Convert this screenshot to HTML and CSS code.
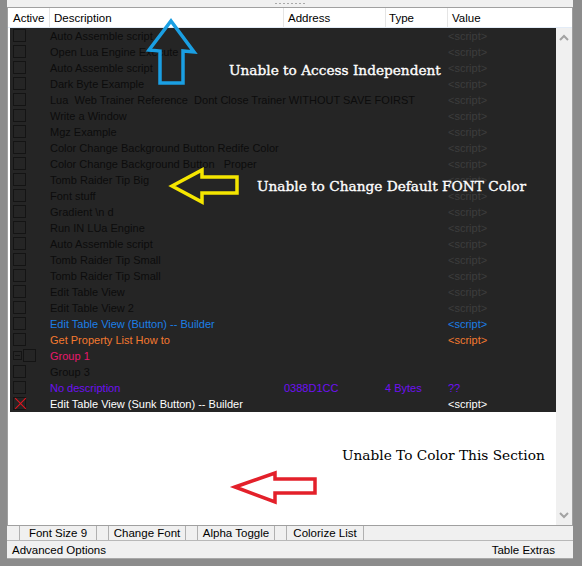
FILE: index.html
```
<!DOCTYPE html>
<html lang="en">
    <head>
        <meta charset="UTF-8">
        <meta name="viewport" content="width=device-width, initial-scale=1.0">
        <link rel="stylesheet" href="styles.css">
        <title>Cheat Table - Dark List</title>
    </head>
    <body>
        <div id="window">
            <div id="splitter"><div class="grip"></div></div>

            <div id="list-panel">
                <div id="header">
                    <div class="col col-active">Active</div>
                    <div class="col col-desc">Description</div>
                    <div class="col col-addr">Address</div>
                    <div class="col col-type">Type</div>
                    <div class="col col-value">Value</div>
                </div>

                <div id="list-body">
                    <div id="list-area">
                        <div id="records">
                            <div class="row"><div class="chk-cell"><span class="chk"></span></div><div class="desc">Auto Assemble script</div><div class="addr"></div><div class="type"></div><div class="value">&lt;script&gt;</div></div>
                            <div class="row"><div class="chk-cell"><span class="chk"></span></div><div class="desc">Open Lua Engine Execute</div><div class="addr"></div><div class="type"></div><div class="value">&lt;script&gt;</div></div>
                            <div class="row"><div class="chk-cell"><span class="chk"></span></div><div class="desc">Auto Assemble script</div><div class="addr"></div><div class="type"></div><div class="value">&lt;script&gt;</div></div>
                            <div class="row"><div class="chk-cell"><span class="chk"></span></div><div class="desc">Dark Byte Example</div><div class="addr"></div><div class="type"></div><div class="value">&lt;script&gt;</div></div>
                            <div class="row"><div class="chk-cell"><span class="chk"></span></div><div class="desc">Lua&nbsp; Web Trainer Reference&nbsp; Dont Close Trainer WITHOUT SAVE FOIRST</div><div class="addr"></div><div class="type"></div><div class="value">&lt;script&gt;</div></div>
                            <div class="row"><div class="chk-cell"><span class="chk"></span></div><div class="desc">Write a Window</div><div class="addr"></div><div class="type"></div><div class="value">&lt;script&gt;</div></div>
                            <div class="row"><div class="chk-cell"><span class="chk"></span></div><div class="desc">Mgz Example</div><div class="addr"></div><div class="type"></div><div class="value">&lt;script&gt;</div></div>
                            <div class="row"><div class="chk-cell"><span class="chk"></span></div><div class="desc">Color Change Background Button Redife Color</div><div class="addr"></div><div class="type"></div><div class="value">&lt;script&gt;</div></div>
                            <div class="row"><div class="chk-cell"><span class="chk"></span></div><div class="desc">Color Change Background Button&nbsp;&nbsp; Proper</div><div class="addr"></div><div class="type"></div><div class="value">&lt;script&gt;</div></div>
                            <div class="row"><div class="chk-cell"><span class="chk"></span></div><div class="desc">Tomb Raider Tip Big</div><div class="addr"></div><div class="type"></div><div class="value">&lt;script&gt;</div></div>
                            <div class="row"><div class="chk-cell"><span class="chk"></span></div><div class="desc">Font stuff</div><div class="addr"></div><div class="type"></div><div class="value">&lt;script&gt;</div></div>
                            <div class="row"><div class="chk-cell"><span class="chk"></span></div><div class="desc">Gradient \n d</div><div class="addr"></div><div class="type"></div><div class="value">&lt;script&gt;</div></div>
                            <div class="row"><div class="chk-cell"><span class="chk"></span></div><div class="desc">Run IN LUa Engine</div><div class="addr"></div><div class="type"></div><div class="value">&lt;script&gt;</div></div>
                            <div class="row"><div class="chk-cell"><span class="chk"></span></div><div class="desc">Auto Assemble script</div><div class="addr"></div><div class="type"></div><div class="value">&lt;script&gt;</div></div>
                            <div class="row"><div class="chk-cell"><span class="chk"></span></div><div class="desc">Tomb Raider Tip Small</div><div class="addr"></div><div class="type"></div><div class="value">&lt;script&gt;</div></div>
                            <div class="row"><div class="chk-cell"><span class="chk"></span></div><div class="desc">Tomb Raider Tip Small</div><div class="addr"></div><div class="type"></div><div class="value">&lt;script&gt;</div></div>
                            <div class="row"><div class="chk-cell"><span class="chk"></span></div><div class="desc">Edit Table View</div><div class="addr"></div><div class="type"></div><div class="value">&lt;script&gt;</div></div>
                            <div class="row"><div class="chk-cell"><span class="chk"></span></div><div class="desc">Edit Table View 2</div><div class="addr"></div><div class="type"></div><div class="value">&lt;script&gt;</div></div>
                            <div class="row blue"><div class="chk-cell"><span class="chk"></span></div><div class="desc">Edit Table View (Button) -- Builder</div><div class="addr"></div><div class="type"></div><div class="value">&lt;script&gt;</div></div>
                            <div class="row orange"><div class="chk-cell"><span class="chk"></span></div><div class="desc">Get Property List How to</div><div class="addr"></div><div class="type"></div><div class="value">&lt;script&gt;</div></div>
                            <div class="row pink"><div class="chk-cell"><span class="expander"></span><span class="chk"></span></div><div class="desc">Group 1</div><div class="addr"></div><div class="type"></div><div class="value"></div></div>
                            <div class="row"><div class="chk-cell"><span class="chk"></span></div><div class="desc">Group 3</div><div class="addr"></div><div class="type"></div><div class="value"></div></div>
                            <div class="row purple"><div class="chk-cell"><span class="chk"></span></div><div class="desc">No description</div><div class="addr">0388D1CC</div><div class="type">4 Bytes</div><div class="value">??</div></div>
                            <div class="row white"><div class="chk-cell"><span class="chk checked"></span></div><div class="desc">Edit Table View (Sunk Button) -- Builder</div><div class="addr"></div><div class="type"></div><div class="value">&lt;script&gt;</div></div>
                        </div>
                    </div>
                    <div id="scrollbar">
                        <svg class="arrow" width="16" height="16" viewBox="0 0 16 16"><polyline points="4,10 8,6 12,10" fill="none" stroke="#a3a3a3" stroke-width="2"/></svg>
                        <svg class="arrow" width="16" height="16" viewBox="0 0 16 16"><polyline points="4,6 8,10 12,6" fill="none" stroke="#a3a3a3" stroke-width="2"/></svg>
                    </div>
                </div>
            </div>

            <div id="tab-row">
                <div class="tab-box"></div><div class="tab-label">Font Size 9</div>
                <div class="tab-box"></div><div class="tab-label">Change Font</div>
                <div class="tab-box"></div><div class="tab-label">Alpha Toggle</div>
                <div class="tab-box"></div><div class="tab-label">Colorize List</div>
            </div>

            <div id="status-bar">
                <span>Advanced Options</span>
                <span>Table Extras</span>
            </div>
        </div>

        <!--annotations drawn over the screenshot-->
        <svg id="marks" width="582" height="566" viewBox="0 0 582 566">
            <polygon points="171,21 194,52 183,51 183,83 160,83 160,51 149,50" fill="none" stroke="#1a9fe3" stroke-width="3.5"/>
            <polygon points="172,186 202,170 202,177 237,177 237,193 202,193 202,202" fill="none" stroke="#f5e600" stroke-width="3.5"/>
            <polygon points="235,487 275,473 275,479 315,479 315,493 275,493 275,502" fill="none" stroke="#e3202a" stroke-width="3.5"/>
        </svg>
        <div class="note light" id="note-access">Unable to Access Independent</div>
        <div class="note light" id="note-font">Unable to Change Default FONT Color</div>
        <div class="note" id="note-section">Unable To Color This Section</div>
    </body>
</html>
```

FILE: styles.css
```
 body {
     margin: 0;
     width: 582px;
     height: 566px;
     background-color: #8c8c8c;
     font-family: 'Liberation Sans', Arial, sans-serif;
     font-size: 11px;
     color: black;
     position: relative;
     overflow: hidden;
 }

 #window {
     width: 566px;
     height: 559px;
     margin-left: 7px;
     background-color: #f0f0f0;
     display: flex;
     flex-direction: column;
 }

 #splitter {
     height: 7px;
     display: flex;
     justify-content: center;
 }

 .grip {
     width: 30px;
     height: 1px;
     margin-top: 3px;
     background-image: repeating-linear-gradient(to right, #a8a8a8 0 2px, transparent 2px 4px);
 }

 #list-panel {
     height: 518px;
     border: 1px solid #a0a0a0;
     background-color: white;
     display: flex;
     flex-direction: column;
 }

 #header {
     height: 20px;
     display: flex;
     border-bottom: 1px solid #e3ecf7;
     box-sizing: border-box;
     font-size: 11.5px;
 }

 .col {
     line-height: 20px;
     padding-left: 4px;
     border-right: 1px solid #e5e5e5;
     box-sizing: border-box;
 }

 .col-active { width: 42px; padding-left: 5px; }
 .col-desc { width: 234px; padding-left: 4px; }
 .col-addr { width: 102px; }
 .col-type { width: 62px; padding-left: 3px; }
 .col-value { flex: 1; border-right: none; }

 #list-body {
     flex: 1;
     display: flex;
 }

 #list-area {
     flex: 1;
     padding-left: 2px;
 }

 #records {
     background-color: #252525;
     height: 384px;
 }

 .row {
     height: 16px;
     display: flex;
     align-items: center;
     white-space: nowrap;
     color: #0c0c0c;
 }

 .row .value {
     color: #3d3d3d;
 }

 .chk-cell {
     width: 40px;
     display: flex;
     align-items: center;
     padding-left: 3px;
     box-sizing: border-box;
 }

 .chk {
     width: 13px;
     height: 13px;
     border: 1px solid #141414;
     box-sizing: border-box;
     position: relative;
 }

 .expander {
     width: 9px;
     height: 9px;
     border: 1px solid #141414;
     box-sizing: border-box;
     margin-right: 1px;
     position: relative;
 }

 .expander::after {
     content: '';
     position: absolute;
     left: 1px;
     top: 3px;
     width: 5px;
     height: 1px;
     background-color: #141414;
 }

 /*red cross for the active record*/
 .chk.checked::before,
 .chk.checked::after {
     content: '';
     position: absolute;
     left: -1px;
     top: 5px;
     width: 15px;
     height: 1px;
     background-color: #e8141e;
     transform: rotate(45deg);
 }

 .chk.checked::after {
     transform: rotate(-45deg);
 }

 .desc { width: 234px; }
 .addr { width: 101px; }
 .type { width: 63px; }
 .value { flex: 1; }

 .blue, .blue .value { color: #1c7fe6; }
 .orange, .orange .value { color: #f47a30; }
 .pink, .pink .value { color: #e8186c; }
 .purple, .purple .value { color: #6e10f2; }
 .white, .white .value { color: white; }

 #scrollbar {
     width: 16px;
     background-color: #f0f0f0;
     display: flex;
     flex-direction: column;
     justify-content: space-between;
     padding: 2px 0;
 }

 .arrow {
     display: block;
 }

 #tab-row {
     height: 14px;
     display: flex;
     border-bottom: 1px solid #b8b8b8;
     padding-left: 1px;
     font-size: 11.5px;
 }

 .tab-box {
     width: 11px;
     border-right: 1px solid #b0b0b0;
     background-color: #f0f0f0;
 }

 .tab-label {
     width: 76px;
     border-right: 1px solid #b0b0b0;
     text-align: center;
     line-height: 14px;
 }

 #status-bar {
     height: 17px;
     display: flex;
     justify-content: space-between;
     align-items: center;
     padding: 0 18px 0 5px;
     border-bottom: 1px solid #a8a8a8;
     font-size: 11.5px;
 }

 #marks {
     position: absolute;
     left: 0;
     top: 0;
     pointer-events: none;
 }

 .note {
     position: absolute;
     font-family: 'DejaVu Serif', serif;
     font-size: 13.7px;
     line-height: 16px;
     white-space: nowrap;
     color: black;
 }

 .note.light {
     color: white;
     -webkit-text-stroke: 0.35px white;
 }

 #note-access { left: 229px; top: 62px; }
 #note-font { left: 257px; top: 178px; }
 #note-section { left: 342px; top: 447px; }
```
